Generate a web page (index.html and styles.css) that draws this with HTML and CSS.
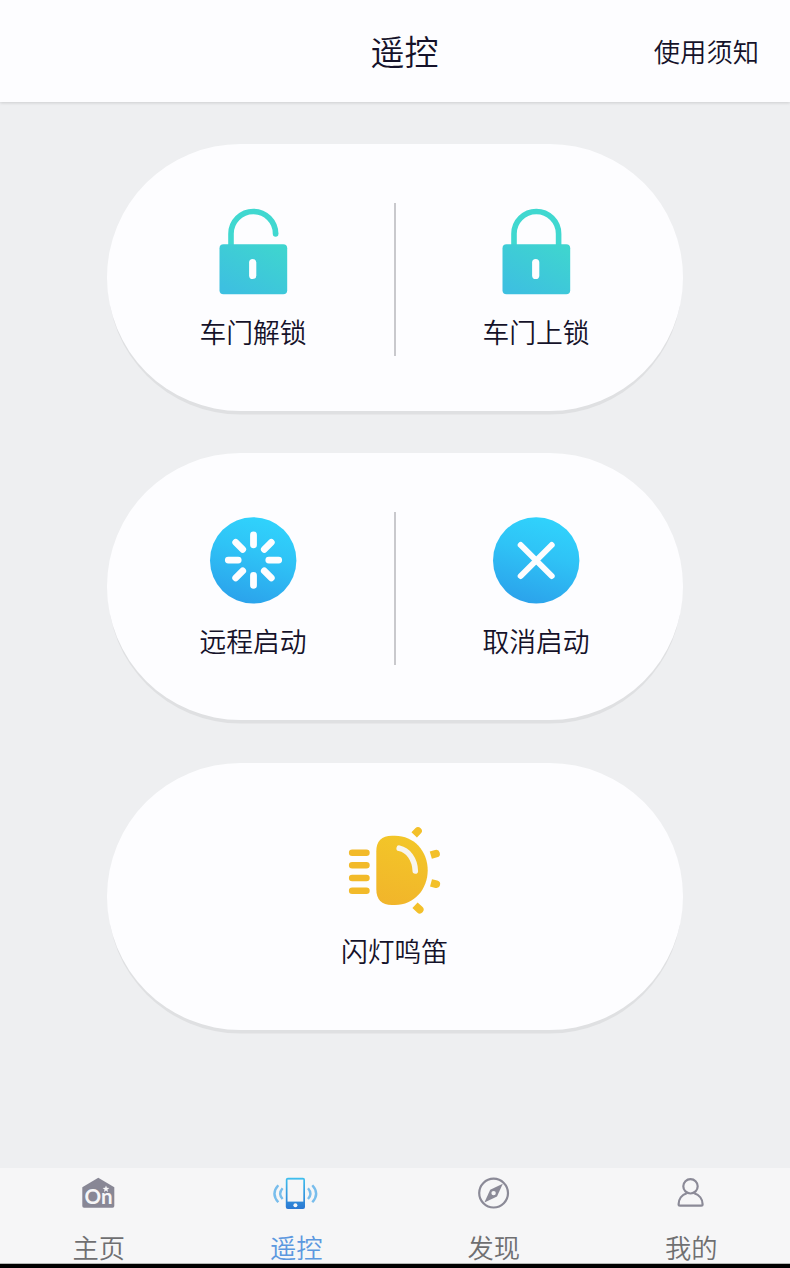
FILE: index.html
```html
<!DOCTYPE html>
<html lang="zh-CN">
<head>
    <meta charset="UTF-8">
    <meta name="viewport" content="width=device-width, initial-scale=1.0">
    <title>遥控</title>
    <link rel="stylesheet" href="styles.css">
</head>
<body>
    <header class="header">
        <h1>遥控</h1>
        <a class="notice">使用须知</a>
    </header>

    <main class="content">
        <section class="card">
            <div class="action">
                <svg class="icon" viewBox="-0.7 0 100 100">
                    <defs>
                        <linearGradient id="teal" gradientUnits="userSpaceOnUse" x1="65" y1="40" x2="35" y2="96">
                            <stop offset="0" stop-color="#3fd5cf"/>
                            <stop offset="1" stop-color="#3dc0e0"/>
                        </linearGradient>
                    </defs>
                    <path d="M27.3 46V33.8A22.3 22.3 0 0 1 71.9 33.8" fill="none" stroke="#40d8d0" stroke-width="5.6"/>
                    <circle cx="71.9" cy="34" r="2.8" fill="#40d8d0"/>
                    <rect x="15.8" y="44.3" width="67.7" height="50" rx="4" fill="url(#teal)"/>
                    <rect x="45.4" y="59" width="7.2" height="20" rx="3.6" fill="#fdfdff"/>
                </svg>
                <span class="label">车门解锁</span>
            </div>
            <div class="divider"></div>
            <div class="action">
                <svg class="icon" viewBox="-0.7 0 100 100">
                    <path d="M27.3 46V33.8A22.3 22.3 0 0 1 71.9 33.8V46" fill="none" stroke="#40d8d0" stroke-width="5.6"/>
                    <rect x="15.8" y="44.3" width="67.7" height="50" rx="4" fill="url(#teal)"/>
                    <rect x="45.4" y="59" width="7.2" height="20" rx="3.6" fill="#fdfdff"/>
                </svg>
                <span class="label">车门上锁</span>
            </div>
        </section>

        <section class="card">
            <div class="action">
                <svg class="icon" viewBox="-0.5 -0.6 100 100">
                    <defs>
                        <linearGradient id="blue" gradientUnits="userSpaceOnUse" x1="62" y1="10" x2="38" y2="94">
                            <stop offset="0" stop-color="#30d2fc"/>
                            <stop offset="0.4" stop-color="#2fc3f6"/>
                            <stop offset="1" stop-color="#2ba2eb"/>
                        </linearGradient>
                    </defs>
                    <circle cx="49.7" cy="50.8" r="43.2" fill="url(#blue)"/>
                    <g transform="translate(50 50.5)" stroke="#fdfdff" stroke-width="6.8" stroke-linecap="round">
                        <path d="M0-15.3V-25.2M0 15.3V25.2M-15.3 0H-25.2M15.3 0H25.2"/>
                        <path d="M-10.8-10.8L-17.8-17.8M10.8-10.8L17.8-17.8M-10.8 10.8L-17.8 17.8M10.8 10.8L17.8 17.8"/>
                    </g>
                </svg>
                <span class="label">远程启动</span>
            </div>
            <div class="divider"></div>
            <div class="action">
                <svg class="icon" viewBox="-0.5 -0.6 100 100">
                    <circle cx="49.7" cy="50.8" r="43.2" fill="url(#blue)"/>
                    <path d="M34.2 35.4L65.2 66.4M65.2 35.4L34.2 66.4" stroke="#fdfdff" stroke-width="6" stroke-linecap="round"/>
                </svg>
                <span class="label">取消启动</span>
            </div>
        </section>

        <section class="card">
            <div class="action">
                <svg class="icon" viewBox="0 0 100 100">
                    <defs>
                        <linearGradient id="amber" gradientUnits="userSpaceOnUse" x1="62" y1="10" x2="38" y2="92">
                            <stop offset="0" stop-color="#f3c828"/>
                            <stop offset="1" stop-color="#f1b32b"/>
                        </linearGradient>
                    </defs>
                    <path d="M31.3 32.5Q31.3 16.7 47 16.7H50C69 16.7 82.7 32 82.7 51.3S69 86 50 86H47Q31.3 86 31.3 70Z" fill="url(#amber)"/>
                    <path d="M7.2 33.7H21.4M7.2 46.3H21.4M7.2 59H21.4M7.2 71.7H21.4" stroke="#f2ba2a" stroke-width="6.6" stroke-linecap="round"/>
                    <path d="M54.2 29.2C63 31 70 40 70.3 52" fill="none" stroke="#f7f5ef" stroke-width="5.6" stroke-linecap="round"/>
                    <g fill="#f3c02a">
                        <path d="M0-3.8H5.5A3.8 3.8 0 0 1 5.5 3.8H0Z" transform="translate(69.2 15.9) rotate(-46)"/>
                        <path d="M0-3.8H5.5A3.8 3.8 0 0 1 5.5 3.8H0Z" transform="translate(85.8 36.2) rotate(-16)"/>
                        <path d="M0-3.8H5.5A3.8 3.8 0 0 1 5.5 3.8H0Z" transform="translate(86 63.8) rotate(15)"/>
                        <path d="M0-3.8H6.5A3.8 3.8 0 0 1 6.5 3.8H0Z" transform="translate(70 86.2) rotate(43)"/>
                    </g>
                </svg>
                <span class="label">闪灯鸣笛</span>
            </div>
        </section>
    </main>

    <nav class="tabbar">
        <a class="tab">
            <svg class="tab-icon" viewBox="0 0 48 36">
                <path d="M23.3 2.7L39.3 12.3V31Q39.3 32.7 37.6 32.7H9Q7.3 32.7 7.3 31V12.3Z" fill="#888795"/>
                <text class="logo-text" x="9.6" y="29.2" textLength="28" lengthAdjust="spacingAndGlyphs">On</text>
                <path d="M31 10.4L31.9 12.8 34.4 12.9 32.4 14.5 33.1 17 31 15.5 28.9 17 29.6 14.5 27.6 12.9 30.1 12.8Z" fill="#f6f6f7"/>
            </svg>
            <span>主页</span>
        </a>
        <a class="tab active">
            <svg class="tab-icon" viewBox="0 0 48 36">
                <defs>
                    <linearGradient id="phone" x1="0" y1="0" x2="0" y2="1">
                        <stop offset="0" stop-color="#3fbfee"/>
                        <stop offset="1" stop-color="#2b78d2"/>
                    </linearGradient>
                </defs>
                <rect x="13.8" y="2.7" width="19.2" height="31.3" rx="2" fill="url(#phone)"/>
                <rect x="15.5" y="4.6" width="15.8" height="22" fill="#f6f6f7"/>
                <circle cx="23.4" cy="30.3" r="2" fill="#f6f6f7"/>
                <g fill="none" stroke="#78bdec" stroke-width="2.4">
                    <path d="M10.6 13.2Q5.8 18.6 10.6 24"/>
                    <path d="M6.3 10.2Q-1.4 18.6 6.3 27.2"/>
                    <path d="M36 13.2Q40.8 18.6 36 24"/>
                    <path d="M40.3 10.2Q48 18.6 40.3 27.2"/>
                </g>
            </svg>
            <span>遥控</span>
        </a>
        <a class="tab">
            <svg class="tab-icon" viewBox="0 0 48 36">
                <circle cx="23.6" cy="18.1" r="14.4" fill="none" stroke="#8b8a97" stroke-width="2.2"/>
                <path d="M32.8 8.8L27 21.4 14.4 27.4 20.2 14.8Z" fill="#8b8a97"/>
                <circle cx="23.6" cy="18.1" r="2.2" fill="#f6f6f7"/>
            </svg>
            <span>发现</span>
        </a>
        <a class="tab">
            <svg class="tab-icon" viewBox="0 0 48 36">
                <g fill="none" stroke="#8b8a97" stroke-width="2.2" stroke-linejoin="round">
                    <circle cx="23.5" cy="11.3" r="7.2"/>
                    <path d="M19.8 18.2C14.8 19.8 11.6 24.2 11.6 29.3Q11.6 30.7 13 30.7H34.2Q35.6 30.7 35.6 29.3C35.6 24.2 32.2 19.8 27.2 18.2"/>
                </g>
            </svg>
            <span>我的</span>
        </a>
    </nav>
    <div class="system-bar"></div>
</body>
</html>
```

FILE: styles.css
```css
* {
    box-sizing: border-box;
}

body {
    margin: 0;
    height: 1268px;
    display: flex;
    flex-direction: column;
    overflow: hidden;
    font-family: "Noto Sans CJK SC", sans-serif;
    font-weight: 350;
    color: #15122a;
    background-color: #eeeff1;
}

.header {
    display: grid;
    grid-template-columns: 1fr auto 1fr;
    align-items: center;
    height: 102px;
    padding: 0 31px 0 50px;
    background-color: #fdfdff;
    box-shadow: 0 1px 3px rgba(0, 0, 0, 0.14);
}

.header h1 {
    grid-column: 2;
    margin: 0;
    font-size: 34px;
    font-weight: inherit;
    line-height: 50px;
}

.notice {
    justify-self: end;
    font-size: 26.3px;
    line-height: 40px;
}

.content {
    flex: 1;
    display: flex;
    flex-direction: column;
    align-items: center;
    gap: 42.4px;
    padding-top: 42px;
}

.card {
    display: flex;
    justify-content: center;
    width: 576px;
    height: 267px;
    border-radius: 133.5px;
    background-color: #fdfdff;
    box-shadow: 0 4.5px 0 -1px #dfe0e2;
}

.action {
    display: flex;
    flex-direction: column;
    align-items: center;
    width: 281px;
    padding: 56px 1px 0 0;
}

.icon {
    width: 100px;
    height: 100px;
}

.label {
    margin-top: 12px;
    font-size: 26.8px;
    line-height: 40px;
}

.divider {
    width: 2px;
    height: 153px;
    margin-top: 59px;
    background-color: #c9c9cd;
}

.tabbar {
    display: grid;
    grid-template-columns: repeat(4, 1fr);
    height: 96px;
    background-color: #f6f6f7;
    border-bottom: 1px solid #b5b8b5;
}

.tab {
    display: flex;
    flex-direction: column;
    align-items: center;
    padding-top: 7px;
    font-size: 26.3px;
    line-height: 40px;
    color: #6f6f71;
}

.tab-icon {
    width: 48px;
    height: 36px;
    margin-bottom: 16px;
}

.tab.active {
    color: #5c98df;
}

.logo-text {
    font-family: Lato, sans-serif;
    font-size: 20px;
    font-weight: bold;
    fill: #f6f6f7;
}

.system-bar {
    height: 4px;
    background-color: #000;
}
```
